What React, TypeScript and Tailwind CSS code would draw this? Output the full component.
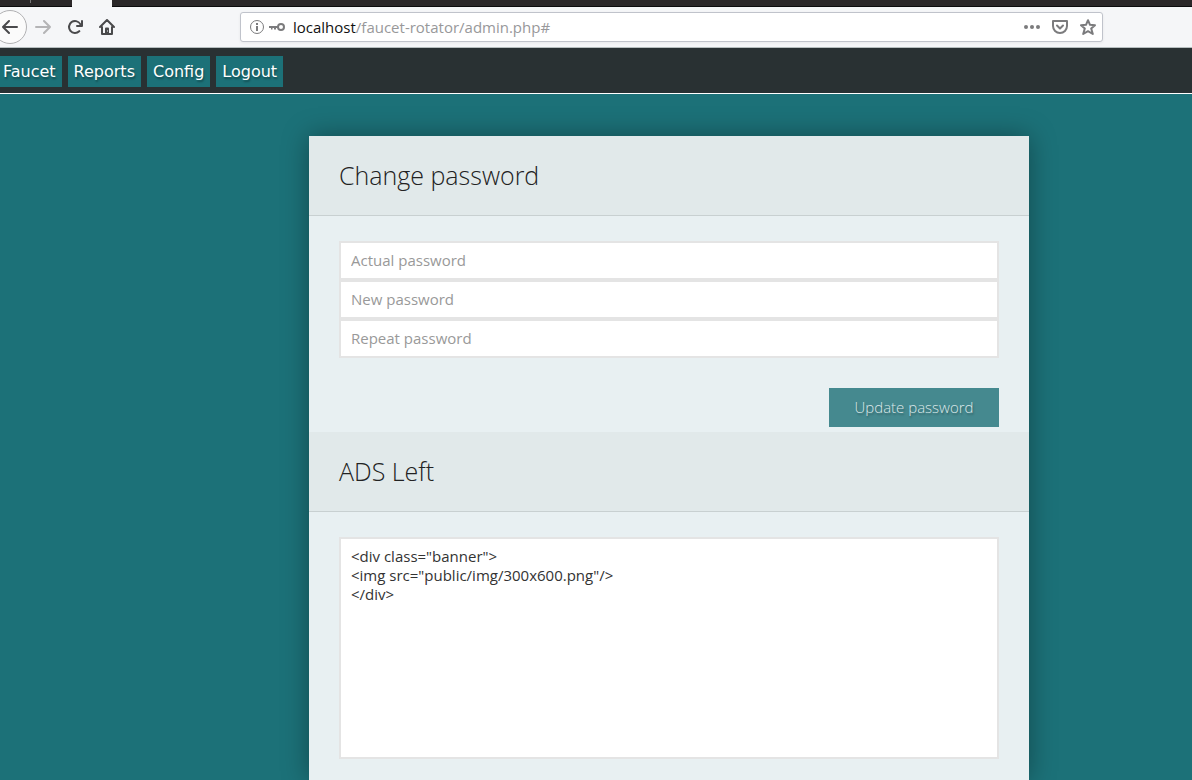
import React from "react";

const navItems = ["Faucet", "Reports", "Config", "Logout"];

const passwordFields = [
  { id: "actual", label: "Actual password" },
  { id: "new", label: "New password" },
  { id: "repeat", label: "Repeat password" },
];

const bannerCode = `<div class="banner">
<img src="public/img/300x600.png"/>
</div>`;

function ArrowIcon({ flip = false }: { flip?: boolean }) {
  return (
    <svg width="16" height="16" viewBox="0 0 16 16" fill="none" stroke="currentColor" strokeWidth="2" strokeLinecap="round" strokeLinejoin="round" aria-hidden="true">
      <path d={flip ? "M1 8h14M9 2l6 6-6 6" : "M15 8H1M7 2L1 8l6 6"} />
    </svg>
  );
}

function ReloadIcon() {
  return (
    <svg width="16" height="16" viewBox="0 0 16 16" aria-hidden="true">
      <path
        fill="currentColor"
        d="M15 1a1 1 0 0 0-1 1v2.400A7 7 0 1 0 12.900 13a1 1 0 1 0-1.400-1.400 5 5 0 1 1 1.200-5.600H10a1 1 0 0 0 0 2h5a1 1 0 0 0 1-1V2a1 1 0 0 0-1-1z"
      />
    </svg>
  );
}

function HomeIcon() {
  return (
    <svg width="16" height="16" viewBox="0 0 16 16" aria-hidden="true">
      <path fill="none" stroke="currentColor" strokeWidth="2" strokeLinecap="round" strokeLinejoin="round" d="M1 8l7-7 7 7M3 8v7h10V8" />
      <path fill="currentColor" fillRule="evenodd" d="M6 15V9.500a1 1 0 0 1 1-1h2a1 1 0 0 1 1 1V15zM8 11.500v1h1v-1z" />
    </svg>
  );
}

function InfoIcon() {
  return (
    <svg width="16" height="16" viewBox="0 0 16 16" aria-hidden="true">
      <circle cx="8" cy="8" r="6.500" fill="none" stroke="currentColor" />
      <path fill="currentColor" d="M7 4h2v2H7zM7 7h2v5H7z" />
    </svg>
  );
}

function KeyIcon() {
  return (
    <svg width="16" height="16" viewBox="0 0 16 16" aria-hidden="true">
      <circle cx="12" cy="8" r="3" fill="none" stroke="currentColor" strokeWidth="2" />
      <path fill="currentColor" d="M0 7h9v2H7v1.500H5V9H3.500v1.500H2V9H0z" />
    </svg>
  );
}

function DotsIcon() {
  return (
    <svg width="16" height="16" viewBox="0 0 16 16" fill="currentColor" aria-hidden="true">
      <circle cx="2" cy="8" r="2" />
      <circle cx="8" cy="8" r="2" />
      <circle cx="14" cy="8" r="2" />
    </svg>
  );
}

function PocketIcon() {
  return (
    <svg width="16" height="16" viewBox="0 0 16 16" fill="none" stroke="currentColor" strokeWidth="2" strokeLinejoin="round" strokeLinecap="round" aria-hidden="true">
      <path d="M1 2h14v5a7 7 0 0 1-14 0z" />
      <path d="M5 6.500l3 3 3-3" />
    </svg>
  );
}

function StarIcon() {
  return (
    <svg width="16" height="16" viewBox="0 0 16 16" fill="none" stroke="currentColor" strokeWidth="2" strokeLinejoin="round" aria-hidden="true">
      <path d="M8 1.200l2 4.600 5 .4-3.800 3.300 1.600 5.500L8 12.200 3.200 15l1.600-5.500L1 6.200l5-.4z" />
    </svg>
  );
}

function BrowserBar() {
  return (
    <header>
      <div className="flex h-[7px] border-b border-[#0c0c0d] bg-[#2b2829] pl-[30px]">
        <div className="h-[3px] w-px bg-[#777]" />
        <div className="ml-[41px] h-[7px] w-10 bg-[#f5f6f7]" />
      </div>
      <div className="flex h-[41px] items-center overflow-hidden border-b border-[#b6bebf] bg-[#f5f6f8] text-[#4a4a4c]">
        <button aria-label="Back" className="-ml-[7px] flex size-[34px] shrink-0 items-center justify-center rounded-full border border-[#b1b1b3] bg-[#fbfbfb]">
          <ArrowIcon />
        </button>
        <div className="ml-2 flex shrink-0 gap-4">
          <button aria-label="Forward" className="text-[#b4b4b6]"><ArrowIcon flip /></button>
          <button aria-label="Reload"><ReloadIcon /></button>
          <button aria-label="Home"><HomeIcon /></button>
        </div>
        <div className="mr-[89px] ml-[125px] flex h-[30px] min-w-0 flex-1 items-center rounded-[3px] border border-[#c0c3cb] bg-white px-2 text-[#7b7b7d] shadow-[0_1px_3px_rgba(0,0,0,0.06)]">
          <InfoIcon />
          <span className="ml-1"><KeyIcon /></span>
          <div className="ml-2 flex-1 truncate font-['Open_Sans',sans-serif] text-[15px] text-[#98989a]">
            <span className="text-[#111]">localhost</span>/faucet-rotator/admin.php#
          </div>
          <div className="mr-[-2px] flex gap-3">
            <button aria-label="Page actions"><DotsIcon /></button>
            <button aria-label="Save to Pocket"><PocketIcon /></button>
            <button aria-label="Bookmark"><StarIcon /></button>
          </div>
        </div>
      </div>
    </header>
  );
}

function SectionTitle({ children }: { children: React.ReactNode }) {
  return (
    <h2 className="flex h-20 items-center border-b border-[#c8d0d1] bg-[#e1e9ea] px-[30px] text-[25px] font-light text-[#222]">
      {children}
    </h2>
  );
}

export default function App() {
  return (
    <div className="flex min-h-screen flex-col bg-[#1c7178] font-['Open_Sans',sans-serif]">
      <BrowserBar />
      <nav className="flex h-[46px] items-start gap-1.5 border-b border-white bg-[#293133] pt-2 font-['DejaVu_Sans',sans-serif] text-base text-white">
        {navItems.map((item) => (
          <a key={item} href="#" className="bg-[#1c7178] px-1.5 py-1 leading-[23px] [text-shadow:1px_2px_2px_rgba(0,0,0,0.35)] first:pl-[3px]">
            {item}
          </a>
        ))}
      </nav>
      <main className="flex flex-1 justify-center overflow-hidden pt-[42px] pl-[146px]">
        <div className="w-full max-w-[720px] bg-[#e8f0f2] text-[15px] leading-[19px] shadow-[0_0_25px_rgba(0,0,0,0.35)]">
          <section>
            <SectionTitle>Change password</SectionTitle>
            <form className="px-[30px] pt-[25px] pb-[5px]">
              {passwordFields.map((field) => (
                <input
                  key={field.id}
                  type="password"
                  aria-label={field.label}
                  placeholder={field.label}
                  className="block h-[39px] w-full border-2 border-[#e4e4e4] bg-white px-2.5 pb-0.5 placeholder:text-[#999]"
                />
              ))}
              <div className="mt-[30px] flex justify-end">
                <button type="button" className="h-[39px] w-[170px] bg-[#45898f] font-light text-[#dce8e9] [text-shadow:1px_2px_2px_rgba(0,0,0,0.3)]">
                  Update password
                </button>
              </div>
            </form>
          </section>
          <section>
            <SectionTitle>ADS Left</SectionTitle>
            <div className="px-[30px] pt-[25px] pb-[21px]">
              <textarea
                aria-label="ADS Left"
                defaultValue={bannerCode}
                spellCheck={false}
                className="block h-[222px] w-full resize-none border-2 border-[#e4e4e4] bg-white px-2.5 py-2 text-[#333]"
              />
            </div>
          </section>
        </div>
      </main>
    </div>
  );
}
